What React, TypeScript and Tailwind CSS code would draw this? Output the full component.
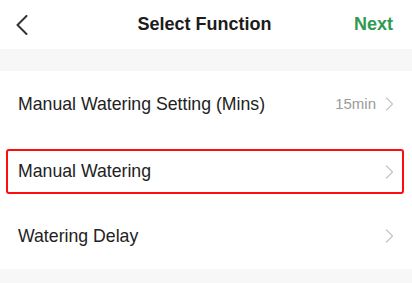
import React from "react";

function ChevronRight() {
  return (
    <svg width="9" height="14" viewBox="0 0 9 14" fill="none" className="shrink-0">
      <path d="M1.5 1 L7.5 7 L1.5 13" stroke="#c6c6c8" strokeWidth="1.2" strokeLinecap="round" strokeLinejoin="round" />
    </svg>
  );
}

function BackChevron() {
  return (
    <svg width="12" height="20" viewBox="0 0 12 20" fill="none">
      <path d="M10.5 1 L1.5 10 L10.5 19" stroke="#333333" strokeWidth="2" strokeLinecap="round" strokeLinejoin="round" />
    </svg>
  );
}

export default function App() {
  return (
    <div
      className="w-[412px] h-[283px] bg-white flex flex-col overflow-hidden"
      style={{ fontFamily: '"Liberation Sans", Arial, sans-serif' }}
    >
      <div className="h-[49px] grid grid-cols-[1fr_auto_1fr] items-center px-[16px] pr-[19px]">
        <div className="flex items-center">
          <BackChevron />
        </div>
        <div className="text-[18px] font-bold text-[#1c1c1c]">Select Function</div>
        <div className="flex justify-end text-[18px] font-bold text-[#2f9a50]">Next</div>
      </div>
      <div className="h-[22px] bg-[#f7f7f7]" />
      <div className="flex flex-col">
        <div className="h-[66px] flex items-center justify-between pl-[18px] pr-[18px]">
          <span className="text-[17.7px] text-[#222222]">Manual Watering Setting (Mins)</span>
          <div className="flex items-center gap-[9px]">
            <span className="text-[15px] text-[#9a9a9a]">15min</span>
            <ChevronRight />
          </div>
        </div>
        <div className="h-[66px] pt-[12px] pb-[9px] pl-[6px] pr-[8px] flex">
          <div className="flex-1 flex items-center justify-between border-2 border-[#ff0d0d] rounded-[3px] pl-[10px] pr-[8.5px]">
            <span className="text-[17.7px] text-[#222222]">Manual Watering</span>
            <ChevronRight />
          </div>
        </div>
        <div className="h-[66px] flex items-center justify-between pl-[18px] pr-[18px]">
          <span className="text-[17.7px] text-[#222222]">Watering Delay</span>
          <ChevronRight />
        </div>
      </div>
      <div className="flex-1 bg-[#f7f7f7]" />
    </div>
  );
}
